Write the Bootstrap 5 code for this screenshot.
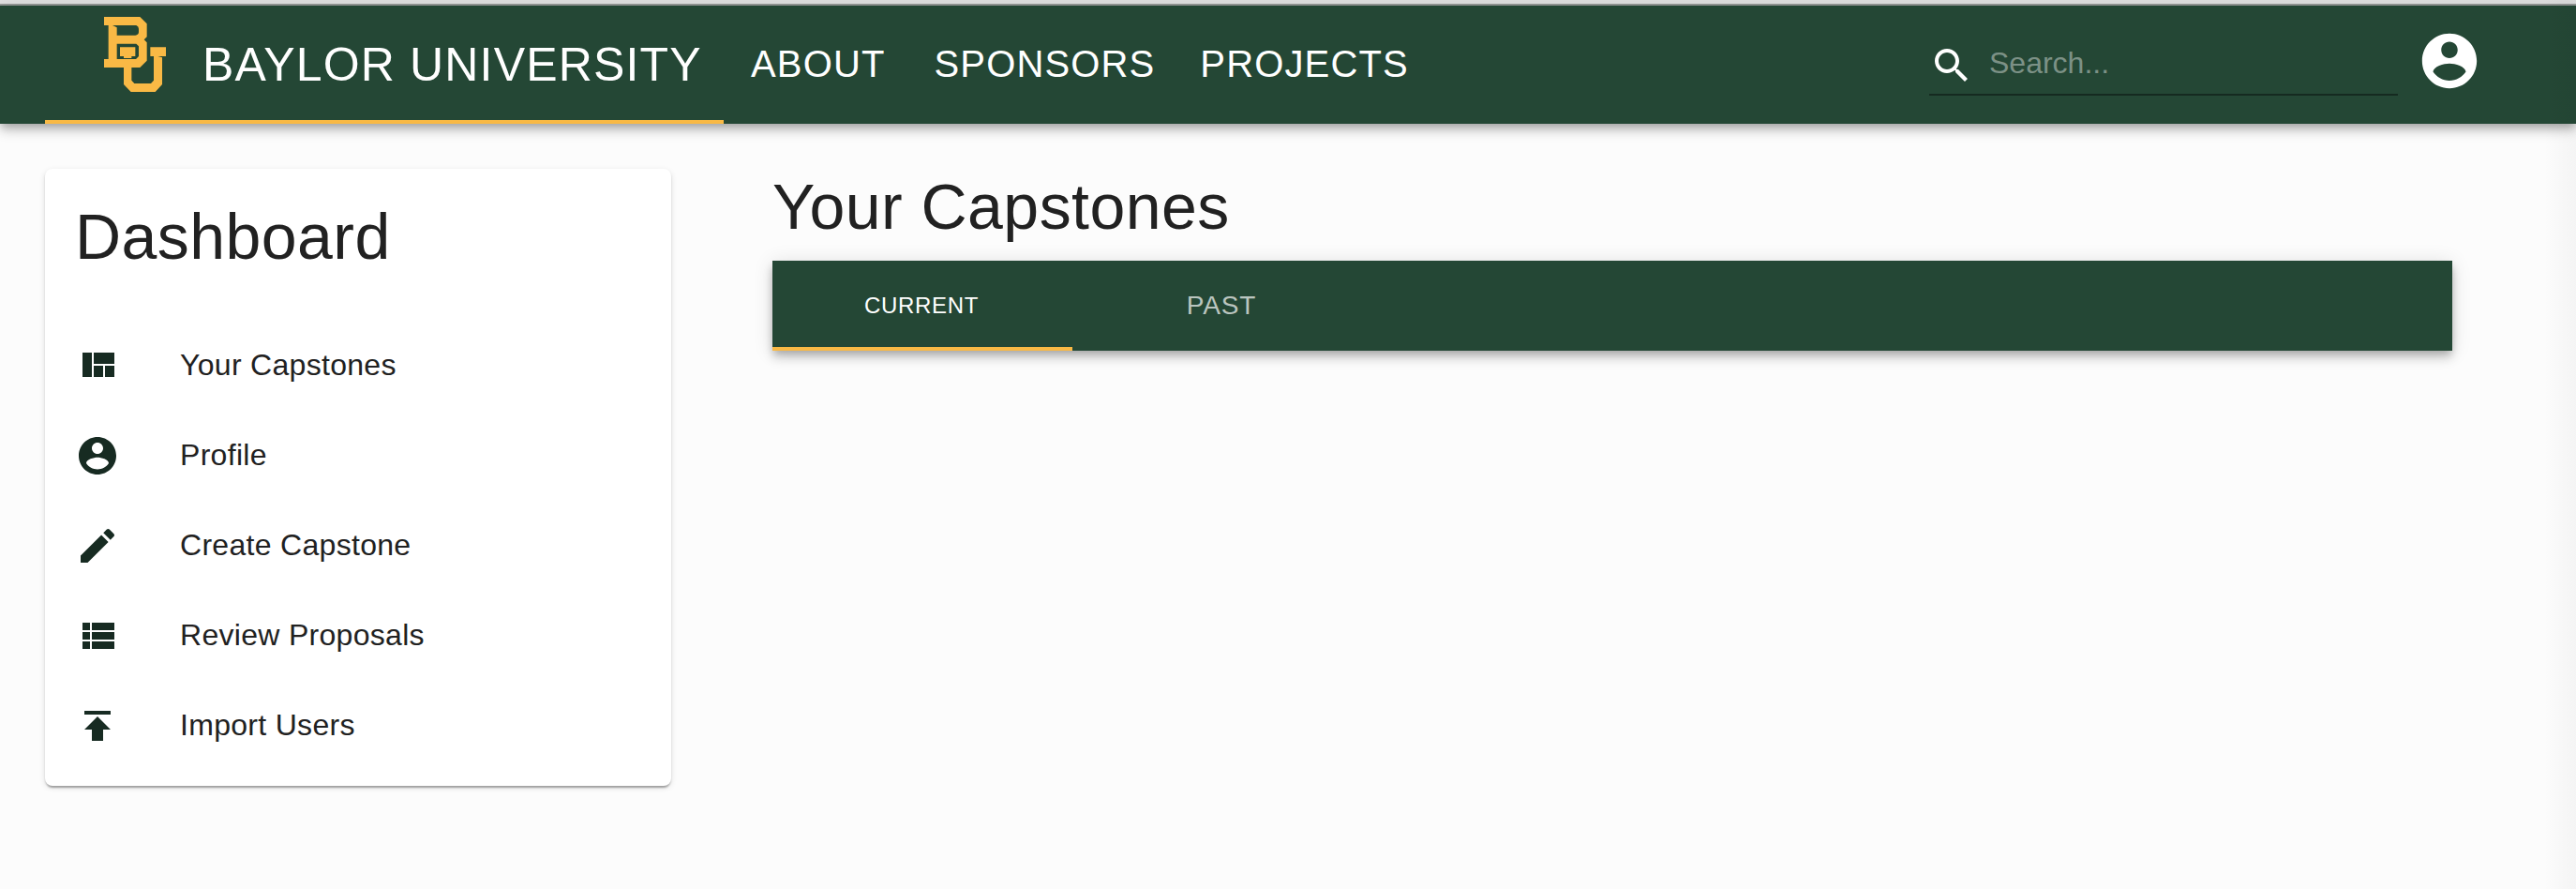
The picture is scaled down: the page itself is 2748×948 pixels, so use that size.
<!DOCTYPE html>
<html lang="en">
<head>
<meta charset="utf-8">
<meta name="viewport" content="width=device-width, initial-scale=1">
<title>Baylor University Capstones</title>
<link href="https://cdn.jsdelivr.net/npm/bootstrap@5.3.0/dist/css/bootstrap.min.css" rel="stylesheet">
<style>
  :root { --green: #244735; --ink: #172b22; --gold: #f9b945; }
  body { font-family: "Liberation Sans", Arial, sans-serif; background: #fcfcfc; color: #212121; min-height: 948px; overflow: hidden; }
  .top-edge { height: 6px; background: #e2e2e2; border-bottom: 2px solid #989b99; }
  .raised { box-shadow: 0 4px 8px -2px rgba(0,0,0,.2), 0 8px 10px rgba(0,0,0,.14), 0 2px 20px rgba(0,0,0,.12); }
  .app-header { height: 126px; background: var(--green); padding: 0 0 0 48px; }
  .brand-tab { width: 724px; height: 126px; padding-left: 62px; border-bottom: 4px solid var(--gold); font-size: 50px; line-height: 60px; letter-spacing: 1.15px; }
  .brand-logo { margin: 11px 37px 0 0; }
  .brand-name { margin: 33px 0 0 1px; }
  .top-links { font-size: 40px; line-height: 48px; letter-spacing: 1.14px; padding: 38px 0 0 29px; }
  .search-field { width: 500px; height: 64px; margin: 32px 20px 0 0; border-bottom: 2px solid #152a20; padding: 8px 0 0; }
  .search-field .form-control { font-size: 32px; line-height: 40px; height: 42px; margin-left: 16px; color: #fff; }
  .search-field .form-control::placeholder { color: #7c9186; opacity: 1; }
  .account { margin: 24px 100px 0 0; }
  .page { padding: 0 132px 0 48px; }
  .dash { width: 668px; height: 658px; margin-top: 48px; padding: 30px 32px 16px; border-radius: 8px; box-shadow: 0 4px 2px -2px rgba(0,0,0,.2), 0 2px 2px rgba(0,0,0,.14), 0 2px 6px rgba(0,0,0,.12); }
  .title { font-size: 68px; line-height: 84px; letter-spacing: .45px; font-weight: 400; }
  .dash .title { margin-bottom: 48px; }
  .dash-item { height: 96px; gap: 64px; font-size: 32px; line-height: 48px; letter-spacing: .3px; color: #212121; }
  .dash-item svg { color: var(--ink); flex: none; }
  .dash-item span { padding-bottom: 3px; }
  .capstones { margin: 46px 0 0 108px; }
  .tab-bar { height: 96px; background: var(--green); }
  .tab-bar .nav-link { width: 320px; border-radius: 0; padding: 4px 2px 0 0; line-height: 34px; border-bottom: 4px solid transparent; font-size: 28px; letter-spacing: .8px; color: rgba(255,255,255,.7); }
  .tab-bar .nav-link.active { color: #fff; border-color: var(--gold); font-size: 24px; letter-spacing: .7px; }
  .edge-shade { top: 0; right: 0; width: 34px; height: 948px; background: linear-gradient(90deg, rgba(0,0,0,0), rgba(0,0,0,.03)); pointer-events: none; }
</style>
</head>
<body class="position-relative">
<svg class="d-none">
  <symbol id="person" viewBox="0 0 24 24"><path fill="currentColor" d="M12 2C6.48 2 2 6.48 2 12s4.480 10 10 10 10-4.480 10-10S17.520 2 12 2zm0 3c1.660 0 3 1.340 3 3s-1.340 3-3 3-3-1.340-3-3 1.340-3 3-3zm0 14.200c-2.500 0-4.710-1.280-6-3.220.030-1.990 4-3.080 6-3.080 1.990 0 5.970 1.090 6 3.080-1.290 1.940-3.500 3.220-6 3.220z"/></symbol>
</svg>
<div class="top-edge"></div>
<header class="app-header raised d-flex align-items-start text-white">
  <a class="brand-tab d-flex align-items-start text-white text-decoration-none text-nowrap" href="#">
    <svg class="brand-logo flex-shrink-0" width="68" height="82" viewBox="60 51 204 246" fill="#f9b945">
      <path fill-rule="evenodd" d="M63 54H178L200 76V118L191 127L200 136V194L178 216H63V189H77V81H63ZM90 81L104 88V113H163Q174 112 174 103V92Q174 84 166 81ZM104 140V189H165L174 180V148L166 140Z"/>
      <path d="M114 151H163V180H151V186H126V180H114Z"/>
      <path d="M126 210H151V257L160 267H213L222 257V180H211V151H261V180H235L249 184V270L227 294H149L126 270Z"/>
    </svg>
    <span class="brand-name">BAYLOR UNIVERSITY</span>
  </a>
  <nav class="top-links d-flex">
    <a class="text-white text-decoration-none me-5" href="#">ABOUT</a>
    <a class="text-white text-decoration-none me-5 ps-1" href="#">SPONSORS</a>
    <a class="text-white text-decoration-none" href="#">PROJECTS</a>
  </nav>
  <div class="search-field d-flex align-items-start ms-auto">
    <svg class="flex-shrink-0" width="48" height="48" viewBox="0 0 24 24"><path fill="#fff" d="M15.500 14h-.790l-.280-.270C15.410 12.590 16 11.110 16 9.500 16 5.910 13.090 3 9.500 3S3 5.910 3 9.500 5.910 16 9.500 16c1.610 0 3.090-.590 4.230-1.570l.270.280v.790l5 4.990L20.490 19l-4.990-5zm-6 0C7.010 14 5 11.990 5 9.500S7.010 5 9.500 5 14 7.010 14 9.500 11.990 14 9.500 14z"/></svg>
    <input class="form-control bg-transparent border-0 rounded-0 p-0" type="text" placeholder="Search...">
  </div>
  <a class="account text-white lh-1" href="#"><svg class="d-block" width="70" height="70"><use href="#person"/></svg></a>
</header>
<main class="page d-flex align-items-start">
  <aside class="dash bg-white flex-shrink-0">
    <h1 class="title">Dashboard</h1>
    <a class="dash-item d-flex align-items-center text-decoration-none" href="#">
      <svg width="48" height="48" viewBox="0 0 24 24"><path fill="currentColor" d="M10 18h5v-6h-5v6zm-6 0h5V5H4v13zm12 0h5v-6h-5v6zM10 5v6h11V5H10z"/></svg>
      <span>Your Capstones</span></a>
    <a class="dash-item d-flex align-items-center text-decoration-none" href="#">
      <svg width="48" height="48"><use href="#person"/></svg>
      <span>Profile</span></a>
    <a class="dash-item d-flex align-items-center text-decoration-none" href="#">
      <svg width="48" height="48" viewBox="0 0 24 24"><path fill="currentColor" d="M3 17.250V21h3.750L17.810 9.940l-3.750-3.750L3 17.250zM20.710 7.040c.390-.390.390-1.020 0-1.410l-2.340-2.340c-.390-.390-1.020-.390-1.410 0l-1.830 1.830 3.750 3.750 1.830-1.830z"/></svg>
      <span>Create Capstone</span></a>
    <a class="dash-item d-flex align-items-center text-decoration-none" href="#">
      <svg width="48" height="48" viewBox="0 0 24 24"><path fill="currentColor" d="M4 14h4v-4H4v4zm0 5h4v-4H4v4zM4 9h4V5H4v4zm5 5h12v-4H9v4zm0 5h12v-4H9v4zM9 5v4h12V5H9z"/></svg>
      <span>Review Proposals</span></a>
    <a class="dash-item d-flex align-items-center text-decoration-none" href="#">
      <svg width="48" height="48" viewBox="0 0 24 24"><path fill="currentColor" d="M5 4v2h14V4H5zm0 10h4v6h6v-6h4l-7-7-7 7z"/></svg>
      <span>Import Users</span></a>
  </aside>
  <section class="capstones flex-grow-1">
    <h2 class="title mb-3">Your Capstones</h2>
    <div class="tab-bar raised nav">
      <a class="nav-link active d-flex align-items-center justify-content-center" href="#">CURRENT</a>
      <a class="nav-link d-flex align-items-center justify-content-center" href="#">PAST</a>
    </div>
  </section>
</main>
<div class="edge-shade position-absolute"></div>
<script src="https://cdn.jsdelivr.net/npm/bootstrap@5.3.0/dist/js/bootstrap.bundle.min.js"></script>
</body>
</html>
